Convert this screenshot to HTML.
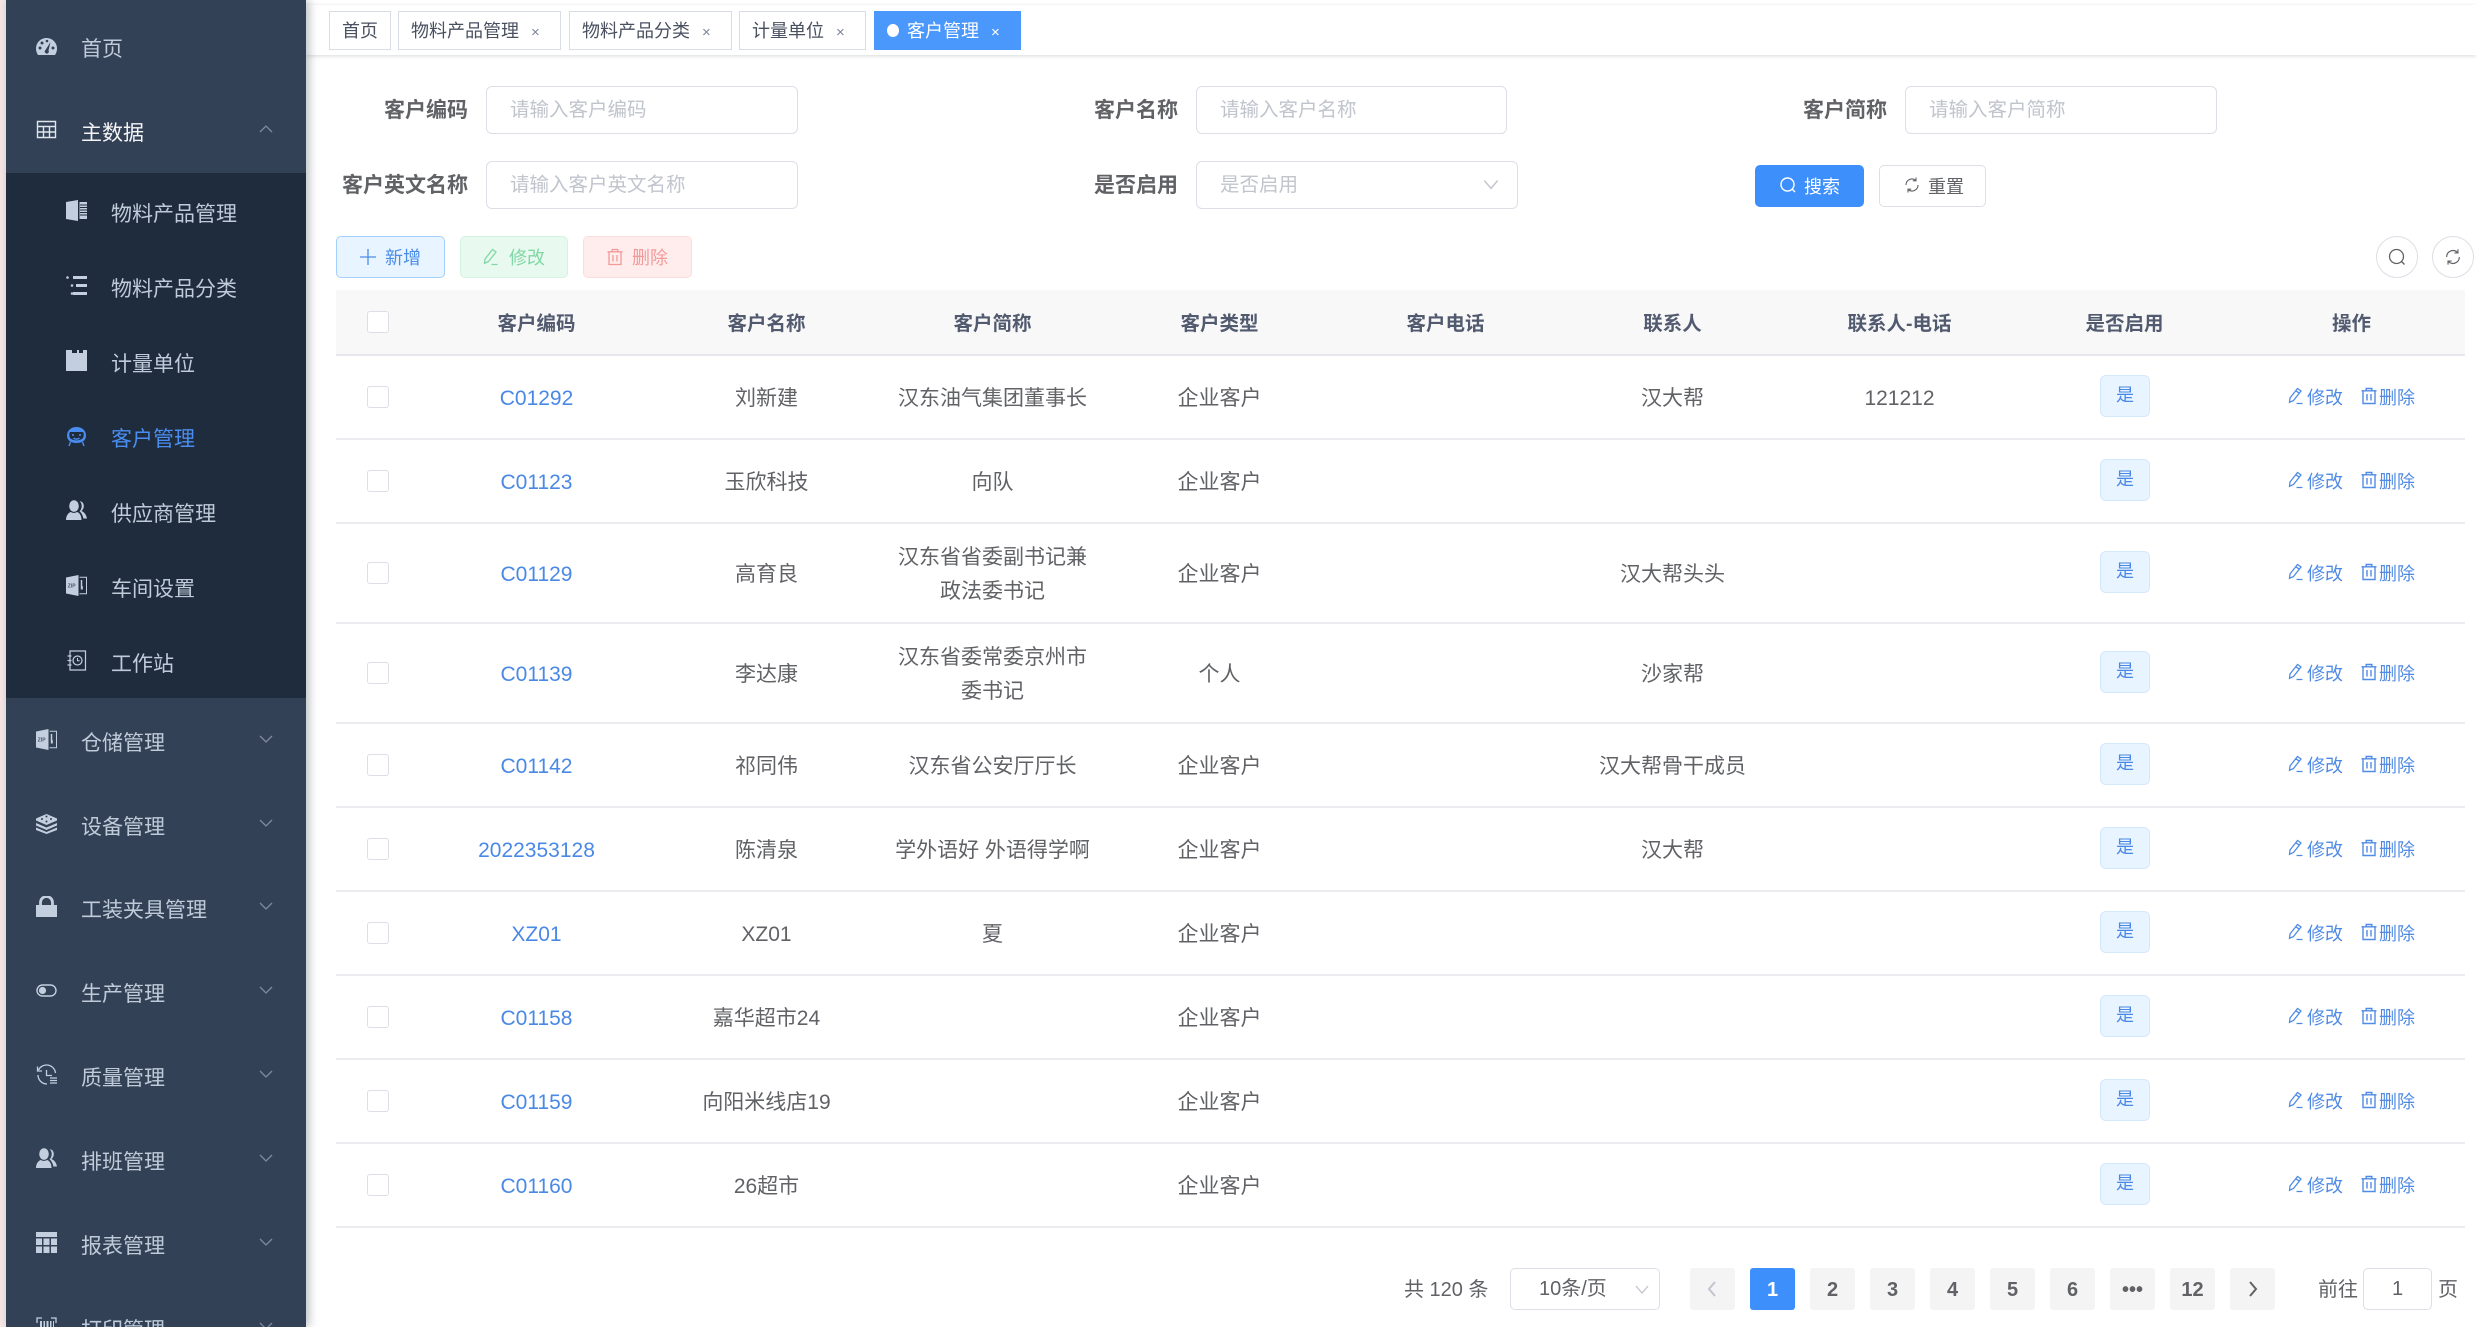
<!DOCTYPE html>
<html lang="zh-CN">
<head>
<meta charset="utf-8">
<title>客户管理</title>
<style>
*{box-sizing:border-box;margin:0;padding:0}
html,body{width:2476px;height:1327px;overflow:hidden;background:#fff}
body{position:relative;font-family:"Liberation Sans","Noto Sans CJK SC",sans-serif;color:#606266;font-size:21px}
div,span,svg{position:absolute}
#strip{left:0;top:0;width:6px;height:1327px;background:#f6e6e6}
#side{left:6px;top:0;width:300px;height:1327px;background:#334157;box-shadow:3px 0 9px rgba(0,21,41,.28);overflow:hidden;z-index:3}
#sub{left:0;top:173px;width:300px;height:525px;background:#1f2c3d}
.m,.s{left:0;width:300px;white-space:nowrap;color:#bfcbd9}
.m{height:84px;line-height:84px}
.s{height:75px;line-height:75px}
.m b,.s b{font-weight:400;position:absolute;top:2px}
.m b{left:75px}
.s b{left:105px}
.m svg.i{left:30px;top:29px}
.s svg.i{left:60px;top:25px}
.m svg.c{left:251px;top:33px}
.i{fill:#c3cfde}
#bar{left:306px;top:5px;width:2170px;height:50px;background:#fff;box-shadow:0 1px 4px rgba(0,21,41,.16);z-index:2}
.tg{top:11px;height:39px;line-height:39px;border:1px solid #d8dce5;background:#fff;font-size:18px;color:#495060;z-index:2;white-space:nowrap}
.tg em{position:absolute;font-style:normal;font-size:15px;color:#7d8594;top:1px}
.tg.on{background:#4b98fd;border-color:#4b98fd;color:#fff}
.tg.on em{color:#fff}
.lb{height:47px;line-height:50px;font-weight:700;color:#606266;text-align:right;white-space:nowrap}
.ip{height:48px;width:312px;border:1.5px solid #dcdfe6;border-radius:6px;background:#fff;line-height:47px;padding-left:23px;color:#c0c4cc;white-space:nowrap;font-size:19.5px}
.btn{top:236px;height:42px;border-radius:5px;font-size:18px;line-height:40px;white-space:nowrap;border:1.5px solid}
.btn b{position:absolute;font-weight:400;top:1px}
.cir{top:236px;width:42px;height:42px;border-radius:50%;border:1.5px solid #dcdfe6;background:#fff}
#th{left:336px;top:290px;width:2129px;height:66px;background:#f8f8f9;border-bottom:2px solid #e6e8ed;font-weight:700;color:#515a6e;font-size:19.5px}
.r{left:336px;width:2129px;border-bottom:2px solid #ebedf1}
.r>span,#th>span{top:3px;bottom:0;width:227px;display:flex;align-items:center;justify-content:center;text-align:center;line-height:34px}
.c1{left:87px}.c2{left:317px}.c3{left:543px}.c4{left:770px}.c5{left:996px}.c6{left:1223px}.c7{left:1450px}.c8{left:1675px}
.lk{color:#4a88e6}
.cb{left:31px;top:50%;margin-top:-11px;width:22px;height:22px;border:1.5px solid #dcdfe6;border-radius:3px;background:#fff}
.tag{left:1764px;top:50%;margin-top:-22px;width:50px;height:42px;border:1.5px solid #d5e8fb;border-radius:6px;background:#e8f4ff;color:#4a88e6;font-size:18px;line-height:39px;text-align:center}
.ed,.de{top:50%;margin-top:-13px;font-size:18px;line-height:29px;color:#4f8be4;white-space:nowrap}
.ed{left:1971px}.de{left:2043px}
.e1{left:1952px;top:50%;margin-top:-10px}.e2{left:2024px;top:50%;margin-top:-10px}
.pg{top:1268px;width:45px;height:42px;background:#f4f4f5;border-radius:3px;text-align:center;line-height:44px;font-weight:700;font-size:20px;color:#606266}
.tx{top:1268px;height:42px;line-height:44px;font-size:20px;white-space:nowrap}
</style>
</head>
<body>
<svg width="0" height="0" style="position:absolute">
<defs>
<symbol id="ed" viewBox="0 0 18 18"><path d="M2 11 9.500 1.500 13 4l-7.500 9.500-4 1.800zM8.500 16.500h6M7.800 3.700l3.500 2.500" fill="none" stroke="#4f8be4" stroke-width="1.300"/></symbol>
<symbol id="de" viewBox="0 0 18 18"><path d="M1.500 3.800h15M3 3.800V16.500h12V3.800M6.200 3.800V1.500h5.600v2.300M7 7v6.500M11 7v6.500" fill="none" stroke="#4f8be4" stroke-width="1.400"/></symbol>
<symbol id="dn" viewBox="0 0 18 12"><path d="M3 3l6 6 6-6" fill="none" stroke="#808b9c" stroke-width="1.300"/></symbol>
<symbol id="zip" viewBox="0 0 21 21"><path d="M0 2.500 12.500 0v21L0 18.500z" fill="#c3cfde"/><path d="M13.500 2.200h7v16.600h-7" fill="none" stroke="#c3cfde" stroke-width="1"/><text x="1.800" y="12.500" font-size="5" font-weight="700" fill="#4a5870" font-family="Liberation Sans">ZIP</text><path d="M15.500 5v6" stroke="#c3cfde" stroke-width="1.500"/><rect x="14.800" y="11" width="2" height="3.500" fill="#c3cfde"/></symbol>
<symbol id="ppl" viewBox="0 0 21 21"><ellipse cx="8" cy="6" rx="4.800" ry="5.800" fill="#c3cfde"/><path d="M0 20c0-5 3-7.500 4.800-8 1.800 1.200 4.400 1.200 6.200 0 2 .5 4.500 3 4.500 8z" fill="#c3cfde"/><path d="M13.500 1.300c2.800 0 4.300 2.200 4.300 4.700s-1 3.800-2.300 5c2.500 1 4.800 3.600 5.500 7.500h-3.600c-.7-3.500-2.300-6-3.900-7.200 1.400-1.300 2.200-3.200 2.200-5.300s-.7-3.600-2.200-4.700z" fill="#c3cfde"/></symbol>
</defs>
</svg>

<div id="strip"></div>
<div id="side">
  <div class="m" style="top:6px"><svg class="i" style="top:30px" width="21" height="21" viewBox="0 0 21 21"><path d="M10.500 2C4.700 2 0 6.700 0 12.500c0 2.300.7 4.500 2 6.500h17c1.300-2 2-4.200 2-6.500C21 6.700 16.300 2 10.500 2z"/><g fill="#334157"><circle cx="4" cy="12" r="1.500"/><circle cx="6" cy="7" r="1.500"/><circle cx="11" cy="5" r="1.300"/><circle cx="17" cy="12" r="1.500"/><path d="M14.500 6 12.500 14.500a2 2 0 1 1-3-.5z"/></g></svg><b>首页</b></div>
  <div class="m" style="top:90px;color:#f4f4f5"><svg class="i" width="21" height="21" viewBox="0 0 21 21"><path d="M1.500 2.500h18v16h-18zM1.500 7.500h18M1.500 13h18M7.500 7.500v11M13.500 7.500v11" fill="none" stroke="#dfe5ec" stroke-width="1.400"/></svg><b>主数据</b><svg class="c" width="18" height="12" viewBox="0 0 18 12"><path d="M3 9l6-6 6 6" fill="none" stroke="#808b9c" stroke-width="1.300"/></svg></div>
  <div id="sub"></div>
  <div class="s" style="top:175px"><svg class="i" width="21" height="21" viewBox="0 0 21 21"><path d="M0 2 12 0v21L0 19zM13.500 2H21v17h-7.500z"/><path d="M14 5h7M14 7.500h7M14 10h7M14 12.500h7M14 15h7" stroke="#1f2c3d" stroke-width="1"/></svg><b>物料产品管理</b></div>
  <div class="s" style="top:250px"><svg class="i" width="21" height="21" viewBox="0 0 21 21"><path d="M7 1h14v3H7zM10 9h11v3H10zM7 17h14v3H7z"/><circle cx="1.500" cy="2.500" r="1.300"/><circle cx="6" cy="10.500" r="1.300"/><circle cx="6" cy="18.500" r="1.300"/></svg><b>物料产品分类</b></div>
  <div class="s" style="top:325px"><svg class="i" width="21" height="21" viewBox="0 0 21 21"><path d="M0 0h21v21H0z"/><path d="M6 0h5v3H6zM13 0h4v3h-4z" fill="#1f2c3d"/></svg><b>计量单位</b></div>
  <div class="s" style="top:400px;color:#4a8df0"><svg width="21" height="21" viewBox="0 0 21 21" style="left:60px;top:26px"><path d="M10.500 1C5 1 1 4.500 1 9.500S5 17 10.500 17 20 14.500 20 9.500 16 1 10.500 1z" fill="#4a8df0"/><path d="M4 6h13c1 1.500 1 5-.5 6.500-3.500 2.500-8.500 2.500-12 0C3 11 3 7.500 4 6z" fill="#1f2c3d"/><circle cx="7" cy="9" r="1" fill="#4a8df0"/><circle cx="14" cy="9" r="1" fill="#4a8df0"/><path d="M7.500 12c1.500 1.500 4.500 1.500 6 0M4.500 16 3 20M16.500 16 18 20" fill="none" stroke="#4a8df0" stroke-width="1.400"/></svg><b>客户管理</b></div>
  <div class="s" style="top:475px"><svg class="i" width="21" height="21"><use href="#ppl"/></svg><b>供应商管理</b></div>
  <div class="s" style="top:550px"><svg class="i" width="21" height="21"><use href="#zip"/></svg><b>车间设置</b></div>
  <div class="s" style="top:625px"><svg class="i" width="21" height="21" viewBox="0 0 21 21"><path d="M4 1h15.500v19H4zM1.500 6h4M1.500 10.500h4M1.500 15h4" fill="none" stroke="#c3cfde" stroke-width="1.200"/><circle cx="11.500" cy="10.500" r="4.500" fill="none" stroke="#c3cfde" stroke-width="1.200"/><path d="M11.500 8v2.700h2.200" fill="none" stroke="#c3cfde"/></svg><b>工作站</b></div>
  <div class="m" style="top:700px"><svg class="i" width="21" height="21"><use href="#zip"/></svg><b>仓储管理</b><svg class="c" width="18" height="12"><use href="#dn"/></svg></div>
  <div class="m" style="top:784px"><svg class="i" width="21" height="21" viewBox="0 0 21 21"><path d="M10.500 1 21 5.500v2L10.500 12 0 7.500v-2z"/><path d="M0 10v2.500L10.500 17 21 12.500V10L10.500 14.500zM0 14.500V17l10.500 4L21 17v-2.500L10.500 19z"/><g fill="#334157"><circle cx="10.500" cy="3.500" r="1"/><circle cx="6" cy="6" r="1"/><circle cx="15" cy="6" r="1"/><circle cx="10.500" cy="8.500" r="1"/></g></svg><b>设备管理</b><svg class="c" width="18" height="12"><use href="#dn"/></svg></div>
  <div class="m" style="top:867px"><svg class="i" width="21" height="21" viewBox="0 0 21 21"><path d="M0 9h21v12H0z"/><path d="M4.500 9.500V6.500a6 6 0 0 1 12 0v3" fill="none" stroke="#c3cfde" stroke-width="2.800"/></svg><b>工装夹具管理</b><svg class="c" width="18" height="12"><use href="#dn"/></svg></div>
  <div class="m" style="top:951px"><svg class="i" width="21" height="21" viewBox="0 0 21 21"><rect x="1" y="5" width="19" height="11" rx="5.500" fill="none" stroke="#c3cfde" stroke-width="1.400"/><circle cx="6.500" cy="10.500" r="3.600"/></svg><b>生产管理</b><svg class="c" width="18" height="12"><use href="#dn"/></svg></div>
  <div class="m" style="top:1035px"><svg class="i" width="21" height="21" viewBox="0 0 21 21"><path d="M2.500 6A9 9 0 0 1 19.500 9M2 11a9 9 0 0 0 9 9M1.500 2.500V7H6M10.500 6v5.500H16M14 14h7M14 16.500h7M14 19h7" fill="none" stroke="#c3cfde" stroke-width="1.300"/></svg><b>质量管理</b><svg class="c" width="18" height="12"><use href="#dn"/></svg></div>
  <div class="m" style="top:1119px"><svg class="i" width="21" height="21"><use href="#ppl"/></svg><b>排班管理</b><svg class="c" width="18" height="12"><use href="#dn"/></svg></div>
  <div class="m" style="top:1203px"><svg class="i" width="21" height="21" viewBox="0 0 21 21"><path d="M0 0h21v5H0zM0 6.500h6v6.500H0zM7.500 6.500h6v6.500h-6zM15 6.500h6v6.500h-6zM0 14.500h6V21H0zM7.500 14.500h6V21h-6zM15 14.500h6V21h-6z"/></svg><b>报表管理</b><svg class="c" width="18" height="12"><use href="#dn"/></svg></div>
  <div class="m" style="top:1287px"><svg class="i" width="21" height="21" viewBox="0 0 21 21"><path d="M1 7V2h5M15 2h5v5" fill="none" stroke="#c3cfde" stroke-width="1.300"/><path d="M4 5h2v14H4zM7.500 5h1.500v14H7.500zM10.500 5h2v14h-2zM14 5h1.500v14H14zM17 5h1v14h-1z"/></svg><b>打印管理</b><svg class="c" width="18" height="12"><use href="#dn"/></svg></div>
</div>

<div id="bar"></div>
<div class="tg" style="left:329px;width:62px;padding-left:12px">首页</div>
<div class="tg" style="left:398px;width:163px;padding-left:12px">物料产品管理<em style="left:132px">×</em></div>
<div class="tg" style="left:569px;width:163px;padding-left:12px">物料产品分类<em style="left:132px">×</em></div>
<div class="tg" style="left:739px;width:127px;padding-left:12px">计量单位<em style="left:96px">×</em></div>
<div class="tg on" style="left:874px;width:147px;padding-left:32px"><i style="position:absolute;left:12px;top:12px;width:12px;height:13px;border-radius:50%;background:#fff"></i>客户管理<em style="left:116px">×</em></div>

<div class="lb" style="left:340px;top:86px;width:128px">客户编码</div>
<div class="ip" style="left:486px;top:86px">请输入客户编码</div>
<div class="lb" style="left:1050px;top:86px;width:128px">客户名称</div>
<div class="ip" style="left:1196px;top:86px;width:311px">请输入客户名称</div>
<div class="lb" style="left:1759px;top:86px;width:128px">客户简称</div>
<div class="ip" style="left:1905px;top:86px;width:312px">请输入客户简称</div>
<div class="lb" style="left:330px;top:161px;width:138px">客户英文名称</div>
<div class="ip" style="left:486px;top:161px">请输入客户英文名称</div>
<div class="lb" style="left:1050px;top:161px;width:128px">是否启用</div>
<div class="ip" style="left:1196px;top:161px;width:322px">是否启用<svg width="20" height="14" viewBox="0 0 18 12" style="left:284px;top:16px"><path d="M3 2l6 7 6-7" fill="none" stroke="#c0c4cc" stroke-width="1.300"/></svg></div>

<div class="btn" style="left:1755px;top:165px;width:109px;background:#3d8ffc;border-color:#3d8ffc;color:#fff"><svg width="18" height="18" viewBox="0 0 18 18" style="left:23px;top:10px"><circle cx="8.500" cy="8.500" r="6.500" fill="none" stroke="#fff" stroke-width="1.400"/><path d="M13 13l3 3" stroke="#fff" stroke-width="1.400"/></svg><b style="left:48px">搜索</b></div>
<div class="btn" style="left:1879px;top:165px;width:107px;background:#fff;border-color:#dcdfe6;color:#606266"><svg width="18" height="18" viewBox="0 0 18 18" style="left:23px;top:10px"><path d="M3 9a6 6 0 0 1 10-4.500M15 9a6 6 0 0 1-10 4.500M13 1.500v3.300H9.800M5 16.500v-3.300h3.200" fill="none" stroke="#606266" stroke-width="1.100"/></svg><b style="left:48px">重置</b></div>

<div class="btn" style="left:336px;width:109px;background:#e8f4ff;border-color:#a3d0fd;color:#4a8de8"><svg width="18" height="18" viewBox="0 0 18 18" style="left:22px;top:11px"><path d="M9 1v16M1 9h16" stroke="#4a8de8" stroke-width="1.300"/></svg><b style="left:48px">新增</b></div>
<div class="btn" style="left:460px;width:108px;background:#e8f9ef;border-color:#d4f4e2;color:#80d8a4"><svg width="18" height="18" viewBox="0 0 18 18" style="left:22px;top:11px"><path d="M2 11 9.500 1.500 13 4l-7.500 9.500-4 1.800zM8.500 16.500h6" fill="none" stroke="#80d8a4" stroke-width="1.300"/></svg><b style="left:48px">修改</b></div>
<div class="btn" style="left:583px;width:109px;background:#ffeded;border-color:#ffdcdc;color:#f29a9a"><svg width="18" height="18" viewBox="0 0 18 18" style="left:22px;top:11px"><path d="M1.500 3.800h15M3 3.800V16.500h12V3.800M6.200 3.800V1.500h5.600v2.300M7 7v6.500M11 7v6.500" fill="none" stroke="#f29a9a" stroke-width="1.300"/></svg><b style="left:48px">删除</b></div>

<div class="cir" style="left:2376px"><svg width="20" height="20" viewBox="0 0 20 20" style="left:10px;top:10px"><circle cx="9.500" cy="9.500" r="7" fill="none" stroke="#606266" stroke-width="1.300"/><path d="M14.500 14.500l3 3" stroke="#606266" stroke-width="1.300"/></svg></div>
<div class="cir" style="left:2432px"><svg width="18" height="18" viewBox="0 0 20 20" style="left:11px;top:11px"><path d="M3 10a7 7 0 0 1 12-5M17 10a7 7 0 0 1-12 5M15.500 1.500v4h-4M4.500 18.500v-4h4" fill="none" stroke="#606266" stroke-width="1.300"/></svg></div>

<div id="th">
  <i class="cb" style="position:absolute"></i>
  <span class="c1">客户编码</span><span class="c2">客户名称</span><span class="c3">客户简称</span><span class="c4">客户类型</span><span class="c5">客户电话</span><span class="c6">联系人</span><span class="c7">联系人-电话</span><span class="c8">是否启用</span><span style="left:1902px">操作</span>
</div>

<div class="r" style="top:356px;height:84px"><i class="cb" style="position:absolute"></i><span class="c1 lk">C01292</span><span class="c2">刘新建</span><span class="c3">汉东油气集团董事长</span><span class="c4">企业客户</span><span class="c6">汉大帮</span><span class="c7">121212</span><div class="tag">是</div><svg class="e1" width="18" height="18"><use href="#ed"/></svg><div class="ed">修改</div><svg class="e2" width="18" height="18"><use href="#de"/></svg><div class="de">删除</div></div>
<div class="r" style="top:440px;height:84px"><i class="cb" style="position:absolute"></i><span class="c1 lk">C01123</span><span class="c2">玉欣科技</span><span class="c3">向队</span><span class="c4">企业客户</span><div class="tag">是</div><svg class="e1" width="18" height="18"><use href="#ed"/></svg><div class="ed">修改</div><svg class="e2" width="18" height="18"><use href="#de"/></svg><div class="de">删除</div></div>
<div class="r" style="top:524px;height:100px"><i class="cb" style="position:absolute"></i><span class="c1 lk">C01129</span><span class="c2">高育良</span><span class="c3">汉东省省委副书记兼<br>政法委书记</span><span class="c4">企业客户</span><span class="c6">汉大帮头头</span><div class="tag">是</div><svg class="e1" width="18" height="18"><use href="#ed"/></svg><div class="ed">修改</div><svg class="e2" width="18" height="18"><use href="#de"/></svg><div class="de">删除</div></div>
<div class="r" style="top:624px;height:100px"><i class="cb" style="position:absolute"></i><span class="c1 lk">C01139</span><span class="c2">李达康</span><span class="c3">汉东省委常委京州市<br>委书记</span><span class="c4">个人</span><span class="c6">沙家帮</span><div class="tag">是</div><svg class="e1" width="18" height="18"><use href="#ed"/></svg><div class="ed">修改</div><svg class="e2" width="18" height="18"><use href="#de"/></svg><div class="de">删除</div></div>
<div class="r" style="top:724px;height:84px"><i class="cb" style="position:absolute"></i><span class="c1 lk">C01142</span><span class="c2">祁同伟</span><span class="c3">汉东省公安厅厅长</span><span class="c4">企业客户</span><span class="c6">汉大帮骨干成员</span><div class="tag">是</div><svg class="e1" width="18" height="18"><use href="#ed"/></svg><div class="ed">修改</div><svg class="e2" width="18" height="18"><use href="#de"/></svg><div class="de">删除</div></div>
<div class="r" style="top:808px;height:84px"><i class="cb" style="position:absolute"></i><span class="c1 lk">2022353128</span><span class="c2">陈清泉</span><span class="c3">学外语好 外语得学啊</span><span class="c4">企业客户</span><span class="c6">汉大帮</span><div class="tag">是</div><svg class="e1" width="18" height="18"><use href="#ed"/></svg><div class="ed">修改</div><svg class="e2" width="18" height="18"><use href="#de"/></svg><div class="de">删除</div></div>
<div class="r" style="top:892px;height:84px"><i class="cb" style="position:absolute"></i><span class="c1 lk">XZ01</span><span class="c2">XZ01</span><span class="c3">夏</span><span class="c4">企业客户</span><div class="tag">是</div><svg class="e1" width="18" height="18"><use href="#ed"/></svg><div class="ed">修改</div><svg class="e2" width="18" height="18"><use href="#de"/></svg><div class="de">删除</div></div>
<div class="r" style="top:976px;height:84px"><i class="cb" style="position:absolute"></i><span class="c1 lk">C01158</span><span class="c2">嘉华超市24</span><span class="c4">企业客户</span><div class="tag">是</div><svg class="e1" width="18" height="18"><use href="#ed"/></svg><div class="ed">修改</div><svg class="e2" width="18" height="18"><use href="#de"/></svg><div class="de">删除</div></div>
<div class="r" style="top:1060px;height:84px"><i class="cb" style="position:absolute"></i><span class="c1 lk">C01159</span><span class="c2">向阳米线店19</span><span class="c4">企业客户</span><div class="tag">是</div><svg class="e1" width="18" height="18"><use href="#ed"/></svg><div class="ed">修改</div><svg class="e2" width="18" height="18"><use href="#de"/></svg><div class="de">删除</div></div>
<div class="r" style="top:1144px;height:84px"><i class="cb" style="position:absolute"></i><span class="c1 lk">C01160</span><span class="c2">26超市</span><span class="c4">企业客户</span><div class="tag">是</div><svg class="e1" width="18" height="18"><use href="#ed"/></svg><div class="ed">修改</div><svg class="e2" width="18" height="18"><use href="#de"/></svg><div class="de">删除</div></div>

<div class="tx" style="left:1404px">共 120 条</div>
<div class="tx" style="left:1510px;width:150px;border:1.5px solid #dcdfe6;border-radius:5px;line-height:41px;padding-left:28px">10条/页<svg width="18" height="12" viewBox="0 0 18 12" style="left:122px;top:15px"><path d="M3 2l6 7 6-7" fill="none" stroke="#c0c4cc" stroke-width="1.300"/></svg></div>
<div class="pg" style="left:1690px"><svg width="14" height="20" viewBox="0 0 14 20" style="left:15px;top:11px"><path d="M10 3 4 10l6 7" fill="none" stroke="#c0c4cc" stroke-width="2"/></svg></div>
<div class="pg" style="left:1750px;background:#3d8ffc;color:#fff">1</div>
<div class="pg" style="left:1810px">2</div>
<div class="pg" style="left:1870px">3</div>
<div class="pg" style="left:1930px">4</div>
<div class="pg" style="left:1990px">5</div>
<div class="pg" style="left:2050px">6</div>
<div class="pg" style="left:2110px">•••</div>
<div class="pg" style="left:2170px">12</div>
<div class="pg" style="left:2230px"><svg width="14" height="20" viewBox="0 0 14 20" style="left:16px;top:11px"><path d="M4 3l6 7-6 7" fill="none" stroke="#606266" stroke-width="2"/></svg></div>
<div class="tx" style="left:2318px">前往</div>
<div class="tx" style="left:2363px;width:69px;border:1.5px solid #dcdfe6;border-radius:5px;text-align:center;line-height:41px">1</div>
<div class="tx" style="left:2438px">页</div>
</body>
</html>
